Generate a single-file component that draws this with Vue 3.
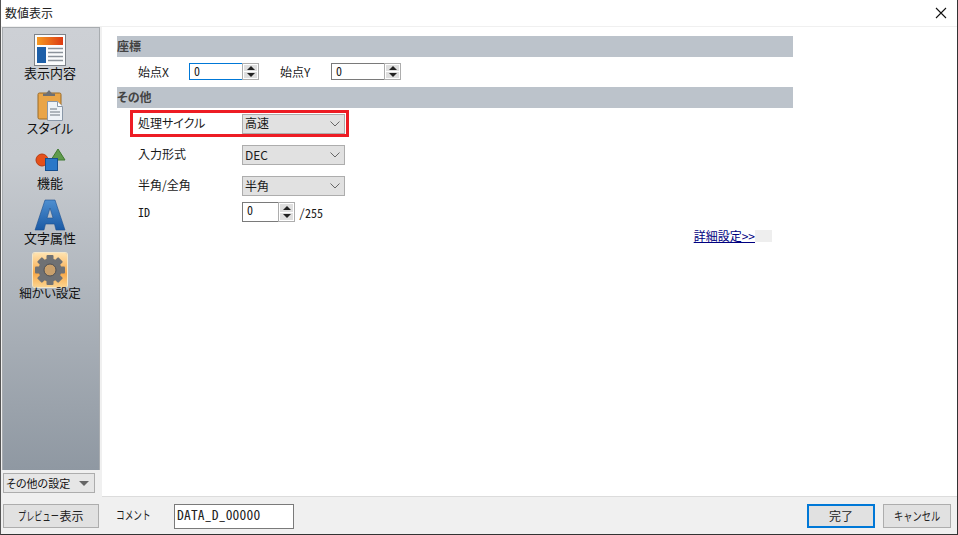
<script setup>
const navItems = [
  { label: '表示内容', icon: 'content' },
  { label: 'スタイル', icon: 'style' },
  { label: '機能', icon: 'func' },
  { label: '文字属性', icon: 'font' },
  { label: '細かい設定', icon: 'gear', active: true }
]
const selects = [
  { label: '処理サイクル', value: '高速', mark: true },
  { label: '入力形式', value: 'DEC' },
  { label: '半角/全角', value: '半角' }
]
</script>

<template>
  <div class="window">
    <header class="titlebar">
      <span class="title">数値表示</span>
      <svg class="close" width="12" height="12" viewBox="0 0 12 12"><path d="M1 1 11 11M11 1 1 11" stroke="#111" stroke-width="1.1" fill="none"/></svg>
    </header>
    <div class="main">
      <aside class="side">
        <nav class="nav">
          <div v-for="item in navItems" :key="item.label" class="nav-item">
            <div class="icon-box" :class="{ active: item.active }">
              <svg v-if="item.icon === 'content'" width="32" height="32" viewBox="0 0 32 32">
                <rect x="0.5" y="0.5" width="31" height="31" fill="#fbfcfd" stroke="#7d8288"/>
                <rect x="3" y="3" width="26" height="8" fill="url(#g1)"/>
                <rect x="3" y="13" width="9" height="16" fill="#1d5fa8"/>
                <path d="M14 14.5h15M14 18.5h15M14 22.5h15M14 26.5h15" stroke="#8c939b" stroke-width="1.4"/>
                <defs><linearGradient id="g1" x1="0" x2="1" y1="0" y2="0"><stop offset="0" stop-color="#f59a23"/><stop offset="1" stop-color="#dd3a12"/></linearGradient></defs>
              </svg>
              <svg v-else-if="item.icon === 'style'" width="32" height="32" viewBox="0 0 32 32">
                <rect x="4" y="4" width="23" height="26" rx="1.5" fill="#e9a548" stroke="#9a6a26"/>
                <path d="M9 7V4.5h3L15 1l3 3.5h3V7z" fill="#6e7074"/>
                <path d="M13.500 12.500h10l5 5v14h-15z" fill="#eef3f8" stroke="#8a98a8"/>
                <path d="M23.500 12.500v5h5" fill="#fff" stroke="#8a98a8"/>
                <path d="M16 20h7M16 23h10M16 26h10" stroke="#6d7680"/>
              </svg>
              <svg v-else-if="item.icon === 'func'" width="32" height="26" viewBox="0 0 32 26">
                <circle cx="8" cy="13" r="6" fill="#e5501a" stroke="#b83a10"/>
                <path d="M24 2 31 13H17z" fill="#5f9a4c" stroke="#3f7a30"/>
                <rect x="11.500" y="11.500" width="12" height="12" fill="#2a78c8" stroke="#154f90"/>
              </svg>
              <svg v-else-if="item.icon === 'font'" width="32" height="32" viewBox="0 0 32 32">
                <path fill-rule="evenodd" d="M11 1h10l10 30h-9l-1.500-6h-9L10 31H1zM16 9l-3 10h6z" fill="url(#g2)" stroke="#1c4f8f" stroke-width=".6"/>
                <defs><linearGradient id="g2" x1="0" x2="0" y1="0" y2="1"><stop offset="0" stop-color="#4f8fd0"/><stop offset="1" stop-color="#1a5aa5"/></linearGradient></defs>
              </svg>
              <svg v-else width="32" height="32" viewBox="0 0 32 32">
                <g fill="#6f7174">
                  <circle cx="16" cy="16" r="11.500"/>
                  <rect v-for="a in [0,45,90,135,180,225,270,315]" :key="a" x="12.500" y="1" width="7" height="8" rx="1" :transform="`rotate(${a} 16 16)`"/>
                </g>
                <circle cx="16" cy="16" r="6" fill="#c9a06c" stroke="#4e5054" stroke-width="1"/>
              </svg>
            </div>
            <span class="nav-label" :class="{ tight: item.active }">{{ item.label }}</span>
          </div>
        </nav>
        <button class="other">
          <span>その他の設定</span><i class="caret"></i>
        </button>
      </aside>
      <section class="content">
        <div class="form">
          <h2 class="band">座標</h2>
          <div class="coords">
            <span class="lab-x">始点X</span>
            <div class="spin focus w-x"><span class="val">0</span><span class="arrows"><i class="up"></i><i class="down"></i></span></div>
            <span class="lab-y">始点Y</span>
            <div class="spin w-x"><span class="val">0</span><span class="arrows"><i class="up"></i><i class="down"></i></span></div>
          </div>
          <h2 class="band">その他</h2>
          <div class="rows">
            <div v-for="s in selects" :key="s.label" class="row" :class="{ marked: s.mark }">
              <span class="row-label">{{ s.label }}</span>
              <div class="select">
                <span>{{ s.value }}</span>
                <svg width="10" height="6" viewBox="0 0 10 6"><path d="M.5.5 5 5 9.500.5" fill="none" stroke="#666"/></svg>
              </div>
            </div>
            <div class="row id-row">
              <span class="row-label">ID</span>
              <div class="spin w-id"><span class="val">0</span><span class="arrows"><i class="up"></i><i class="down"></i></span></div>
              <span class="max">/255</span>
            </div>
          </div>
          <div class="detail"><a class="link">詳細設定&gt;&gt;</a><span class="pad"></span></div>
        </div>
      </section>
    </div>
    <footer class="footer">
      <button class="btn preview"><span class="narrow kana-preview">プレビュー</span>表示</button>
      <span class="comment"><span class="narrow kana-comment">コメント</span></span>
      <div class="comment-box">DATA_D_00000</div>
      <div class="actions">
        <button class="btn primary">完了</button>
        <button class="btn cancel"><span class="narrow kana-cancel">キャンセル</span></button>
      </div>
    </footer>
  </div>
</template>

<style>
html, body { margin: 0; padding: 0; overflow: hidden; }
</style>

<style scoped>
.window {
  width: 958px; height: 535px; box-sizing: border-box;
  display: flex; flex-direction: column;
  background: #f0f0f0;
  border-right: 1px solid #333; border-bottom: 1px solid #333; border-left: 1px solid #555;
  font-family: "Noto Sans CJK JP", "Liberation Sans", sans-serif;
  font-size: 12px; color: #1a1a1a;
  font-feature-settings: "palt";
}
.titlebar {
  height: 26px; flex: none; background: #fff;
  display: flex; align-items: center; justify-content: space-between;
  padding: 0 10px 2px 4px; box-sizing: border-box;
}
.title { font-size: 12px; color: #222; }
.close { display: block; margin-top: 2px; }
.main { flex: 1; display: flex; min-height: 0; padding-top: 1px; }
.side { width: 100px; flex: none; display: flex; flex-direction: column; padding-left: 1px; box-sizing: border-box; }
.nav {
  flex: 1; width: 98px; box-sizing: border-box;
  background: linear-gradient(#cdd0d5 0, #c7cbd0 30%, #8f98a2 100%);
  border: 1px solid #a8acb0; border-bottom: 0;
  padding: 5px 2px 0 0;
  display: flex; flex-direction: column; align-items: center;
}
.nav-item { height: 55px; display: flex; flex-direction: column; align-items: center; }
.icon-box { width: 34px; height: 34px; display: flex; align-items: center; justify-content: center; border-radius: 2px; }
.icon-box.active { background: linear-gradient(#ffe3b0, #f8a94a 60%, #fcd48f); box-shadow: 0 0 0 1px #f5e7c8; }
.nav-label { font-size: 13px; line-height: 16px; margin-top: -2px; color: #111; white-space: nowrap; }
.nav-label.tight { font-size: 12.500px; }
.other {
  width: 92px; height: 20px; margin: 3px 0 4px 1px; padding: 0 5px 0 2px;
  background: #e6e6e6; border: 1px solid #adadad; box-sizing: border-box;
  display: flex; align-items: center; justify-content: space-between;
  font: inherit; font-size: 11px; color: #111; white-space: nowrap;
}
.caret { width: 0; height: 0; flex: none; border-left: 5px solid transparent; border-right: 5px solid transparent; border-top: 5px solid #666; }
.content { flex: 1; background: #fff; margin-left: 1px; min-width: 0; border-bottom: 1px solid #dcdcdc; }
.form { width: 676px; margin: 9px 0 0 15px; }
.band {
  margin: 0; height: 21px; background: #bcc3cb; color: #444;
  font-size: 12px; font-weight: 700; line-height: 20px;
}
.coords { height: 30px; display: flex; align-items: center; padding-bottom: 2px; box-sizing: border-box; }
.lab-x { margin-left: 21px; width: 51px; }
.lab-y { margin-left: 21px; width: 51px; }
.spin { display: flex; height: 17px; box-sizing: border-box; }
.w-x { width: 70px; }
.w-id { width: 53px; height: 20px; }
.val {
  flex: 1; border: 1px solid #7a7a7a; border-right: 0; background: #fff;
  padding-left: 4px; line-height: 13px; font-size: 12px;
  font-feature-settings: "hwid";
}
.focus .val { border-color: #0078d7; }
.arrows {
  width: 17px; flex: none; display: flex; flex-direction: column; gap: 1px; padding: 1px;
  box-sizing: border-box; border: 1px solid #adadad; background: #fff;
}
.arrows i { flex: 1; background: #dfdfdf; display: flex; align-items: center; justify-content: center; }
.up::before { content: ""; border-left: 4px solid transparent; border-right: 4px solid transparent; border-bottom: 4px solid #222; }
.down::before { content: ""; border-left: 4px solid transparent; border-right: 4px solid transparent; border-top: 4px solid #222; }
.rows { margin-top: 2px; margin-left: 13px; width: 219px; }
.row { display: flex; align-items: center; height: 20px; box-sizing: border-box; padding-left: 8px; }
.row-label { width: 104px; flex: none; padding-bottom: 4px; }
.marked { border: 3px solid #ed1c24; height: 27px; padding-left: 5px; margin-bottom: 8px; }
.marked .row-label, .id-row .row-label { padding-bottom: 2px; }
.select {
  width: 103px; height: 20px; box-sizing: border-box; flex: none;
  background: #e1e1e1; border: 1px solid #adadad;
  display: flex; align-items: center; justify-content: space-between;
  padding: 0 4px 2px 2px; font-size: 12px;
}
.select svg { margin-top: 2px; }
.row:nth-child(2) { margin-bottom: 11px; }
.row:nth-child(3) { margin-bottom: 6px; }
.id-row .row-label { font-feature-settings: "hwid"; }
.max { margin-left: 4px; font-size: 12px; font-feature-settings: "hwid"; }
.detail { display: flex; justify-content: flex-end; align-items: center; height: 14px; margin: 7px 21px 0 0; }
.link { color: #000080; text-decoration: underline; font-size: 12px; line-height: 14px; }
.pad { width: 17px; height: 12px; background: #eeeeee; }
.footer { height: 37px; flex: none; display: flex; align-items: center; padding: 1px 6px 0 2px; box-sizing: border-box; }
.btn {
  height: 24px; box-sizing: border-box; background: #e1e1e1; border: 1px solid #adadad;
  font: inherit; color: #222; padding: 0 0 1px;
  font-feature-settings: normal;
  display: flex; align-items: center; justify-content: center; white-space: nowrap;
}
.narrow { display: inline-block; text-align: left; transform-origin: left center; white-space: nowrap; }
.kana-preview { width: 41px; transform: scaleX(.68); }
.kana-cancel { width: 46px; transform: scaleX(.77); }
.kana-comment { width: 33px; transform: scaleX(.72); padding-bottom: 3px; }
.preview { width: 96px; }
.comment { margin-left: 17px; width: 58px; font-size: 12px; font-feature-settings: normal; }
.comment-box {
  width: 120px; height: 25px; box-sizing: border-box; background: #fff; border: 1px solid #7a7a7a;
  padding-left: 2px; line-height: 18px; font-size: 13.500px;
  font-feature-settings: "hwid"; letter-spacing: .2px; color: #222;
}
.actions { margin-left: auto; display: flex; gap: 8px; }
.primary { width: 68px; border: 2px solid #0078d7; }
.cancel { width: 68px; }
</style>
